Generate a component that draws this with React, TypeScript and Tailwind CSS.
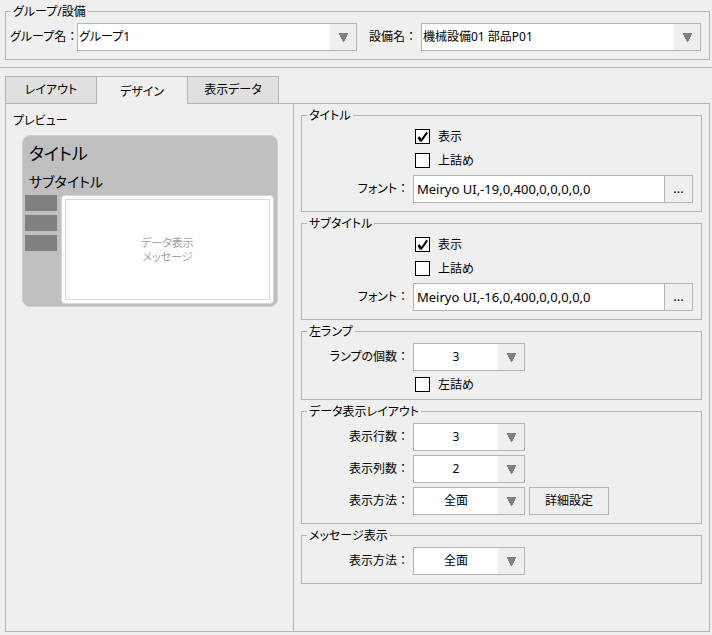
import { useId, useState } from "react";
import type { ReactNode } from "react";

type ComboProps = { options: string[]; centered?: boolean; id: string; className?: string };

function Combo({ options, centered, id, className = "" }: ComboProps) {
  return (
    <div className={`relative h-7 border border-[#b4b4b4] bg-white ${className}`}>
      <select
        id={id}
        className={`block h-full w-full appearance-none bg-transparent pr-[26px] outline-none ${
          centered ? "text-center" : "pl-px text-left"
        }`}
      >
        {options.map((o) => (
          <option key={o}>{o}</option>
        ))}
      </select>
      <span className="pointer-events-none absolute inset-y-0 right-0 flex w-[26px] items-center justify-center bg-[#efefef]">
        <svg width="9" height="9" viewBox="0 0 9 9" fill="#808080" shapeRendering="crispEdges" aria-hidden="true">
          <path d="M0 0h9v2H8v2H7v2H6v2H5v1H4V8H3V6H2V4H1V2H0z" />
        </svg>
      </span>
    </div>
  );
}

function LabelText({ children }: { children: string }) {
  return (
    <>
      {children}
      <span className="[font-feature-settings:normal]">：</span>
    </>
  );
}

function Group({ title, children, className = "pb-2" }: { title: string; children: ReactNode; className?: string }) {
  return (
    <fieldset className={`min-w-0 border border-[#b4b4b4] pr-2 ${className}`}>
      <legend className="ml-[5px] px-0.5 leading-[17px]">{title}</legend>
      <div className="flex flex-col gap-1 pt-[3px]">{children}</div>
    </fieldset>
  );
}

function Row({ label, htmlFor, children }: { label: string; htmlFor: string; children: ReactNode }) {
  return (
    <div className="flex h-7 items-center">
      <label htmlFor={htmlFor} className="w-[111px] shrink-0 pr-1 text-right">
        <LabelText>{label}</LabelText>
      </label>
      {children}
    </div>
  );
}

function Check({ label, initial = false }: { label: string; initial?: boolean }) {
  const [on, setOn] = useState(initial);
  return (
    <div className="flex h-5 items-center pb-px pl-[113px]">
      <label className="flex items-center gap-2">
        <span className="relative block size-[15px]">
          <input
            type="checkbox"
            checked={on}
            onChange={(e) => setOn(e.target.checked)}
            className="block size-[15px] appearance-none border border-black bg-white"
          />
          {on && (
            <svg
              className="pointer-events-none absolute inset-0"
              width="15"
              height="15"
              viewBox="0 0 15 15"
              fill="none"
              stroke="#000"
              aria-hidden="true"
            >
              <path d="M3.6 8L6 12" strokeWidth="2.6" />
              <path d="M5.8 12.4L12.2 3.4" strokeWidth="2" />
            </svg>
          )}
        </span>
        {label}
      </label>
    </div>
  );
}

function FontRow({ value }: { value: string }) {
  const id = useId();
  return (
    <Row label="フォント" htmlFor={id}>
      <input
        id={id}
        defaultValue={value}
        className="h-7 min-w-0 flex-1 border border-[#b4b4b4] bg-white px-[3px] text-[13px] outline-none"
      />
      <button type="button" className="h-7 w-7 border border-l-0 border-[#b4b4b4] text-[13px]">
        ...
      </button>
    </Row>
  );
}

function ComboRow({ label, options, children }: { label: string; options: string[]; children?: ReactNode }) {
  const id = useId();
  return (
    <Row label={label} htmlFor={id}>
      <Combo id={id} options={options} centered className="w-28" />
      {children}
    </Row>
  );
}

function Preview() {
  return (
    <div className="ml-4 mr-[15px] mt-1.5 flex h-[172px] flex-col rounded-lg border border-[#cfcfcf] bg-[#bfbfbf] pb-0.5 pl-0.5 pr-[3px]">
      <div className="px-1 pt-1 text-[17px] leading-7">タイトル</div>
      <div className="px-1 pb-px pt-0.5 text-sm leading-6">サブタイトル</div>
      <div className="flex min-h-0 flex-1 gap-1">
        <div className="flex flex-col gap-1">
          <div className="h-4 w-8 bg-[#808080]" />
          <div className="h-4 w-8 bg-[#808080]" />
          <div className="h-4 w-8 bg-[#808080]" />
        </div>
        <div className="flex-1 rounded border border-[#d8d8d8] bg-white p-[3px]">
          <div className="flex h-full flex-col items-center justify-center border border-[#d8d8d8] text-[11px] leading-[14px] text-[#a0a0a0]">
            <span>データ表示</span>
            <span>メッセージ</span>
          </div>
        </div>
      </div>
    </div>
  );
}

const tabs = ["レイアウト", "デザイン", "表示データ"];

export default function App() {
  return (
    <div className="flex min-h-screen flex-col bg-[#efefef] pb-[3px] pt-[3px] font-['Noto_Sans','Noto_Sans_CJK_JP',sans-serif] text-xs text-black [font-feature-settings:'palt']">
      <fieldset className="ml-[5px] mr-0.5 min-w-0 border border-[#b4b4b4] pb-2 pl-1 pr-2">
        <legend className="ml-px px-0.5 leading-[17px]">グループ/設備</legend>
        <div className="flex items-center pt-[3px]">
          <label htmlFor="group" className="w-[67px] shrink-0 whitespace-nowrap">
            <LabelText>グループ名</LabelText>
          </label>
          <Combo id="group" options={["グループ1"]} className="flex-1" />
          <label htmlFor="machine" className="ml-3 w-[52px] shrink-0 whitespace-nowrap">
            <LabelText>設備名</LabelText>
          </label>
          <Combo id="machine" options={["機械設備01 部品P01"]} className="flex-1" />
        </div>
      </fieldset>

      <hr className="mt-[7px] border-[#b4b4b4]" />

      <div role="tablist" className="relative z-10 -mb-px ml-[5px] mt-2 flex h-7">
        {tabs.map((t, i) =>
          i === 1 ? (
            <button
              key={t}
              type="button"
              role="tab"
              aria-selected="true"
              className="w-[90px] border-t border-[#b4b4b4] bg-[#efefef] pt-0.5"
            >
              {t}
            </button>
          ) : (
            <button
              key={t}
              type="button"
              role="tab"
              aria-selected="false"
              className="w-[92px] border border-[#b4b4b4] bg-[#e0e0e0]"
            >
              {t}
            </button>
          ),
        )}
      </div>

      <main className="ml-[5px] mr-0.5 flex flex-1 border border-[#b4b4b4]">
        <section className="w-[288px] shrink-0 border-r border-[#b4b4b4] pt-2">
          <h2 className="pl-[7px] leading-[17px]">プレビュー</h2>
          <Preview />
        </section>
        <section className="flex min-w-0 flex-1 flex-col gap-[3px] px-[7px] pb-4 pt-[3px]">
          <Group title="タイトル">
            <Check label="表示" initial />
            <Check label="上詰め" />
            <FontRow value="Meiryo UI,-19,0,400,0,0,0,0,0" />
          </Group>
          <Group title="サブタイトル">
            <Check label="表示" initial />
            <Check label="上詰め" />
            <FontRow value="Meiryo UI,-16,0,400,0,0,0,0,0" />
          </Group>
          <Group title="左ランプ" className="pb-1">
            <ComboRow label="ランプの個数" options={["3"]} />
            <Check label="左詰め" />
          </Group>
          <Group title="データ表示レイアウト">
            <ComboRow label="表示行数" options={["3"]} />
            <ComboRow label="表示列数" options={["2"]} />
            <ComboRow label="表示方法" options={["全面"]}>
              <button type="button" className="ml-1 h-7 w-20 border border-[#b4b4b4]">
                詳細設定
              </button>
            </ComboRow>
          </Group>
          <Group title="メッセージ表示">
            <ComboRow label="表示方法" options={["全面"]} />
          </Group>
        </section>
      </main>
    </div>
  );
}
